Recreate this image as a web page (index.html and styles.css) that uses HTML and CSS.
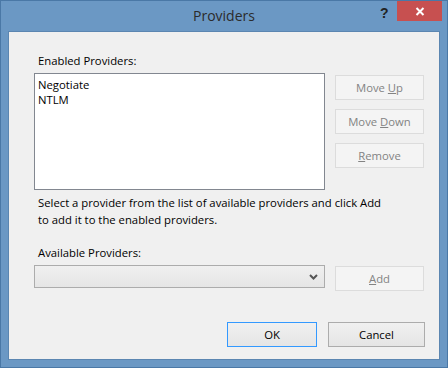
FILE: index.html
```html
<!DOCTYPE html>
<html lang="en">
<head>
    <meta charset="UTF-8">
    <title>Providers</title>
    <link rel="stylesheet" href="styles.css">
</head>
<body>
    <div class="window">
        <div class="titlebar">
            <div class="title">Providers</div>
            <div class="help">?</div>
            <div class="close">
                <svg width="10" height="9" viewBox="0 0 10 9">
                    <path d="M1.5 1 L8.5 8 M8.5 1 L1.5 8" stroke="#fff" stroke-width="2"/>
                </svg>
            </div>
        </div>
        <div class="client">
            <div class="label first">Enabled Providers:</div>
            <div class="row">
                <div class="listbox">
                    <div>Negotiate</div>
                    <div>NTLM</div>
                </div>
                <div class="side">
                    <button class="btn" disabled>Move <u>U</u>p</button>
                    <button class="btn" disabled>Move <u>D</u>own</button>
                    <button class="btn" disabled><u>R</u>emove</button>
                </div>
            </div>
            <p class="hint">Select a provider from the list of available providers and click Add<br>to add it to the enabled providers.</p>
            <div class="label">Available Providers:</div>
            <div class="row combo-row">
                <div class="combo">
                    <svg width="9" height="6" viewBox="0 0 9 6">
                        <path d="M1 1 L4.5 4.5 L8 1" stroke="#555" stroke-width="2" fill="none"/>
                    </svg>
                </div>
                <button class="btn add" disabled><u>A</u>dd</button>
            </div>
            <div class="footer">
                <button class="btn dlg default">OK</button>
                <button class="btn dlg">Cancel</button>
            </div>
        </div>
    </div>
</body>
</html>
```

FILE: styles.css
```css
body {
    margin: 0;
    font-family: "Segoe UI", "Open Sans", Arial, sans-serif;
    font-size: 11.3px;
    color: #000;
}

.window {
    width: 448px;
    height: 368px;
    box-sizing: border-box;
    background-color: #6b98c4;
    border: 1px solid #4a78a6;
    display: flex;
    flex-direction: column;
}

.titlebar {
    height: 30px;
    position: relative;
}

.title {
    text-align: center;
    font-size: 14px;
    line-height: 15px;
    padding-top: 7px;
    color: #2b2b2b;
}

.help {
    position: absolute;
    left: 379px;
    top: 4px;
    font-size: 14px;
    font-weight: bold;
    color: #222;
    font-family: "Liberation Sans", Arial, sans-serif;
}

.close {
    position: absolute;
    left: 396px;
    top: 0;
    width: 45px;
    height: 20px;
    background-color: #c75050;
    display: flex;
    justify-content: center;
    align-items: center;
}

.client {
    margin: 0 7px;
    height: 329px;
    box-sizing: border-box;
    background-color: #f0f0f0;
    border: 1px solid #5b86b1;
    padding: 0 15px 0 25px;
}

.label {
    line-height: 16px;
    padding-left: 4px;
}

.label.first {
    margin-top: 21px;
    margin-bottom: 4px;
}

.row {
    display: flex;
    gap: 10px;
}

.listbox {
    width: 291px;
    height: 117px;
    box-sizing: border-box;
    background: #fff;
    border: 1px solid #828790;
    padding: 3px 0 0 3px;
    line-height: 15px;
}

.side {
    display: flex;
    flex-direction: column;
    gap: 9px;
    padding-top: 2px;
}

.btn {
    width: 89px;
    height: 25px;
    font-family: inherit;
    font-size: 11.3px;
    border: 1px solid #acacac;
    background: linear-gradient(#f0f0f0, #e5e5e5);
    color: #000;
    padding: 0;
}

.btn:disabled {
    background: #f4f4f4;
    border-color: #dcdcdc;
    color: #838383;
}

.hint {
    margin: 4px 0 0 4px;
    line-height: 17px;
}

.hint + .label {
    margin-top: 17px;
    margin-bottom: 4px;
}

.combo {
    width: 291px;
    height: 23px;
    box-sizing: border-box;
    border: 1px solid #acacac;
    background: linear-gradient(#f0f0f0, #e5e5e5);
    display: flex;
    justify-content: flex-end;
    align-items: center;
    padding-right: 6px;
}

.add {
    margin-top: 1px;
}

.footer {
    display: flex;
    justify-content: flex-end;
    gap: 11px;
    margin-top: 31px;
    margin-right: -1px;
}

.dlg {
    width: 90px;
}

.dlg + .dlg {
    width: 97px;
}

.default {
    border-color: #3399ff;
}
```
